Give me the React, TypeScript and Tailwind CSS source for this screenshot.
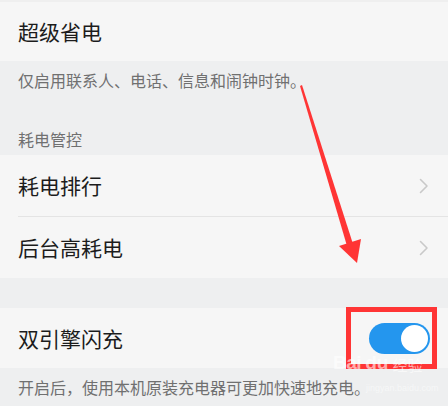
const ChevronRight = () => (
  <svg width="10" height="16" viewBox="0 0 10 16" fill="none">
    <path d="M1.5 1.5 L8 8 L1.5 14.5" stroke="#c9c9c9" strokeWidth="1.6" strokeLinecap="round" strokeLinejoin="round" />
  </svg>
);

const Row = ({ title, chevron }: { title: string; chevron?: boolean }) => (
  <div className="h-[61px] flex items-center justify-between pl-[18px] pr-[19px] bg-[#f6f6f6]">
    <span className="text-[21px] text-[#1c1c1c] leading-none">{title}</span>
    {chevron && <ChevronRight />}
  </div>
);

const App = () => {
  return (
    <div
      className="relative w-[448px] h-[406px] overflow-hidden bg-[#eeeff0]"
      style={{ fontFamily: '"Noto Sans CJK SC", "Noto Sans", sans-serif' }}
    >
      <div className="h-[2px] bg-[#efefef]" />
      <div className="h-[59px] flex items-center pl-[18px] bg-[#f6f6f6]">
        <span className="text-[21px] text-[#1c1c1c] leading-none">超级省电</span>
      </div>

      <div className="h-[94px] pl-[18px] flex flex-col">
        <p className="mt-[8px] text-[16px] leading-[22px] text-[#707070]">仅启用联系人、电话、信息和闹钟时钟。</p>
        <p className="mt-[38px] text-[16px] leading-[20px] text-[#707070]">耗电管控</p>
      </div>

      <Row title="耗电排行" chevron />
      <div className="bg-[#f6f6f6] pl-[18px]">
        <div className="h-px bg-[#e4e4e4]" />
      </div>
      <Row title="后台高耗电" chevron />

      <div className="h-[30px]" />

      <div className="h-[60px] flex items-center justify-between pl-[18px] pr-[18px] bg-[#f6f6f6]">
        <span className="text-[21px] text-[#1c1c1c] leading-none">双引擎闪充</span>
        <div className="w-[61px] h-[31px] rounded-full bg-[#2496ee] flex items-center justify-end pr-[2px]">
          <div className="w-[27px] h-[27px] rounded-full bg-white" />
        </div>
      </div>

      <div className="pl-[18px] pt-[8px]">
        <p className="text-[16px] leading-[22px] text-[#707070]">开启后，使用本机原装充电器可更加快速地充电。</p>
      </div>

      {/* annotation: red box around the switch */}
      <div className="absolute left-[346px] top-[307px] w-[91px] h-[62px] border-[5px] border-[#ff3535]" />

      {/* annotation: arrow */}
      <svg className="absolute left-0 top-0" width="448" height="406" viewBox="0 0 448 406">
        <polygon points="300,86 302,85 353,244 347,246" fill="#ff3535" />
        <polygon points="339,246 361,239 357,263" fill="#ff3535" />
      </svg>

      {/* watermark */}
      <div className="absolute left-[333px] top-[353px] flex items-end gap-[4px] text-white/60 leading-none">
        <span className="text-[19px] font-bold tracking-tight" style={{ fontFamily: '"Liberation Sans", sans-serif' }}>Bai</span>
        <span className="text-[19px] font-bold" style={{ fontFamily: '"Liberation Sans", sans-serif' }}>du</span>
        <span className="text-[15px]">经验</span>
      </div>
      <div className="absolute left-[366px] top-[382px] text-[9px] text-white/50" style={{ fontFamily: '"Liberation Sans", sans-serif' }}>
        jingyan.baidu.com
      </div>
    </div>
  );
};

export default App;
